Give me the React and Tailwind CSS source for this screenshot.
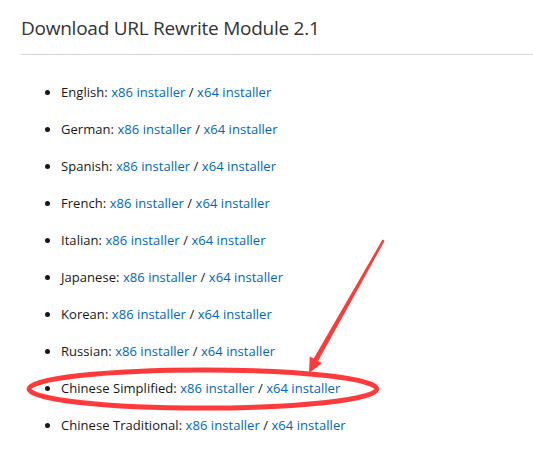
const langs = [
  'English',
  'German',
  'Spanish',
  'French',
  'Italian',
  'Japanese',
  'Korean',
  'Russian',
  'Chinese Simplified',
  'Chinese Traditional',
]

export default function App() {
  return (
    <div className="relative w-[533px] h-[458px] bg-white overflow-hidden" style={{ fontFamily: '"Open Sans", "Noto Sans", sans-serif' }}>
      <div className="pl-[21px] pt-[14px]">
        <h2 className="text-[19px] leading-[28px] tracking-[-0.25px] text-[#333333] font-normal">Download URL Rewrite Module 2.1</h2>
        <div className="mt-[12px] h-px bg-[#d2d6d8]" />
      </div>

      <ul className="pl-[61px] pt-[27px] flex flex-col gap-[17px] list-disc text-[13px] leading-[20px] tracking-[0.05px] text-[#171717]">
        {langs.map((l) => (
          <li key={l} className="pl-0">
            {l}:{' '}
            <a className="text-[#0067b8]">x86 installer</a>
            {' / '}
            <a className="text-[#0067b8]">x64 installer</a>
          </li>
        ))}
      </ul>

      {/* red annotation */}
      <svg className="absolute inset-0 pointer-events-none" width="533" height="458" viewBox="0 0 533 458">
        <ellipse cx="203" cy="389" rx="174" ry="19" fill="none" stroke="#fe3a3a" strokeWidth="5" />
        <polygon
          fill="#fe3a3a"
          points="383.5,240 384.5,241 318.1,361 322,363.2 309,373 309.8,356.4 313.7,358.6 382.5,239.6"
        />
      </svg>
    </div>
  )
}
